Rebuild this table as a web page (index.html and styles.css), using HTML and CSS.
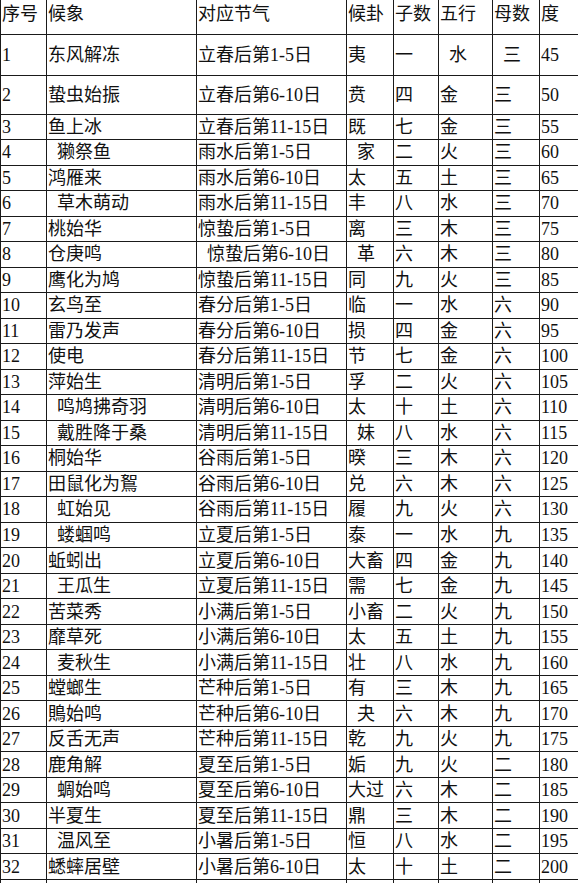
FILE: index.html
```html
<!DOCTYPE html>
<html lang="zh">
<head>
<meta charset="utf-8">
<title>七十二候</title>
<link rel="stylesheet" href="styles.css">
</head>
<body>
<table class="hou">
<colgroup>
<col class="c-no"><col class="c-xiang"><col class="c-jie"><col class="c-gua"><col class="c-zi"><col class="c-wu"><col class="c-mu"><col class="c-du">
</colgroup>
<thead>
<tr class="h0"><th>序号</th><th>候象</th><th>对应节气</th><th>候卦</th><th>子数</th><th>五行</th><th>母数</th><th>度</th></tr>
</thead>
<tbody>
<tr class="h1"><td>1</td><td>东风解冻</td><td>立春后第1-5日</td><td>夷</td><td>一</td><td class="i">水</td><td class="i">三</td><td>45</td></tr>
<tr class="h2"><td>2</td><td>蛰虫始振</td><td>立春后第6-10日</td><td>贲</td><td>四</td><td>金</td><td>三</td><td>50</td></tr>
<tr class="r"><td>3</td><td>鱼上冰</td><td>立春后第11-15日</td><td>既</td><td>七</td><td>金</td><td>三</td><td>55</td></tr>
<tr class="r"><td>4</td><td class="i">獭祭鱼</td><td>雨水后第1-5日</td><td class="i">家</td><td>二</td><td>火</td><td>三</td><td>60</td></tr>
<tr class="r"><td>5</td><td>鸿雁来</td><td>雨水后第6-10日</td><td>太</td><td>五</td><td>土</td><td>三</td><td>65</td></tr>
<tr class="r"><td>6</td><td class="i">草木萌动</td><td>雨水后第11-15日</td><td>丰</td><td>八</td><td>水</td><td>三</td><td>70</td></tr>
<tr class="r"><td>7</td><td>桃始华</td><td>惊蛰后第1-5日</td><td>离</td><td>三</td><td>木</td><td>三</td><td>75</td></tr>
<tr class="r"><td>8</td><td>仓庚鸣</td><td class="i">惊蛰后第6-10日</td><td class="i">革</td><td>六</td><td>木</td><td>三</td><td>80</td></tr>
<tr class="r"><td>9</td><td>鹰化为鸠</td><td>惊蛰后第11-15日</td><td>同</td><td>九</td><td>火</td><td>三</td><td>85</td></tr>
<tr class="r"><td>10</td><td>玄鸟至</td><td>春分后第1-5日</td><td>临</td><td>一</td><td>水</td><td>六</td><td>90</td></tr>
<tr class="r"><td>11</td><td>雷乃发声</td><td>春分后第6-10日</td><td>损</td><td>四</td><td>金</td><td>六</td><td>95</td></tr>
<tr class="r"><td>12</td><td>使电</td><td>春分后第11-15日</td><td>节</td><td>七</td><td>金</td><td>六</td><td>100</td></tr>
<tr class="r"><td>13</td><td>萍始生</td><td>清明后第1-5日</td><td>孚</td><td>二</td><td>火</td><td>六</td><td>105</td></tr>
<tr class="r"><td>14</td><td class="i">鸣鸠拂奇羽</td><td>清明后第6-10日</td><td>太</td><td>十</td><td>土</td><td>六</td><td>110</td></tr>
<tr class="r"><td>15</td><td class="i">戴胜降于桑</td><td>清明后第11-15日</td><td class="i">妹</td><td>八</td><td>水</td><td>六</td><td>115</td></tr>
<tr class="r"><td>16</td><td>桐始华</td><td>谷雨后第1-5日</td><td>暌</td><td>三</td><td>木</td><td>六</td><td>120</td></tr>
<tr class="r"><td>17</td><td>田鼠化为鴽</td><td>谷雨后第6-10日</td><td>兑</td><td>六</td><td>木</td><td>六</td><td>125</td></tr>
<tr class="r"><td>18</td><td class="i">虹始见</td><td>谷雨后第11-15日</td><td>履</td><td>九</td><td>火</td><td>六</td><td>130</td></tr>
<tr class="r"><td>19</td><td class="i">蝼蝈鸣</td><td>立夏后第1-5日</td><td>泰</td><td>一</td><td>水</td><td>九</td><td>135</td></tr>
<tr class="r"><td>20</td><td>蚯蚓出</td><td>立夏后第6-10日</td><td>大畜</td><td>四</td><td>金</td><td>九</td><td>140</td></tr>
<tr class="r"><td>21</td><td class="i">王瓜生</td><td>立夏后第11-15日</td><td>需</td><td>七</td><td>金</td><td>九</td><td>145</td></tr>
<tr class="r"><td>22</td><td>苦菜秀</td><td>小满后第1-5日</td><td>小畜</td><td>二</td><td>火</td><td>九</td><td>150</td></tr>
<tr class="r"><td>23</td><td>靡草死</td><td>小满后第6-10日</td><td>太</td><td>五</td><td>土</td><td>九</td><td>155</td></tr>
<tr class="r"><td>24</td><td class="i">麦秋生</td><td>小满后第11-15日</td><td>壮</td><td>八</td><td>水</td><td>九</td><td>160</td></tr>
<tr class="r"><td>25</td><td>螳螂生</td><td>芒种后第1-5日</td><td>有</td><td>三</td><td>木</td><td>九</td><td>165</td></tr>
<tr class="r"><td>26</td><td>鵙始鸣</td><td>芒种后第6-10日</td><td class="i">夬</td><td>六</td><td>木</td><td>九</td><td>170</td></tr>
<tr class="r"><td>27</td><td>反舌无声</td><td>芒种后第11-15日</td><td>乾</td><td>九</td><td>火</td><td>九</td><td>175</td></tr>
<tr class="r"><td>28</td><td>鹿角解</td><td>夏至后第1-5日</td><td>姤</td><td>九</td><td>火</td><td>二</td><td>180</td></tr>
<tr class="r"><td>29</td><td class="i">蜩始鸣</td><td>夏至后第6-10日</td><td>大过</td><td>六</td><td>木</td><td>二</td><td>185</td></tr>
<tr class="r"><td>30</td><td>半夏生</td><td>夏至后第11-15日</td><td>鼎</td><td>三</td><td>木</td><td>二</td><td>190</td></tr>
<tr class="r"><td>31</td><td class="i">温风至</td><td>小暑后第1-5日</td><td>恒</td><td>八</td><td>水</td><td>二</td><td>195</td></tr>
<tr class="r"><td>32</td><td>蟋蟀居壁</td><td>小暑后第6-10日</td><td>太</td><td>十</td><td>土</td><td>二</td><td>200</td></tr>
<tr class="r"><td></td><td></td><td></td><td></td><td></td><td></td><td></td><td></td></tr>
</tbody>
</table>
</body>
</html>
```

FILE: styles.css
```css
html, body {
  margin: 0;
  padding: 0;
  background: #ffffff;
  overflow: hidden;
}

.hou {
  border-collapse: collapse;
  table-layout: fixed;
  width: 579px;
  font-family: "Liberation Serif", "Noto Sans CJK SC", serif;
  font-size: 18px;
  color: #111;
}

.c-no { width: 46px; }
.c-xiang { width: 150px; }
.c-jie { width: 150px; }
.c-gua { width: 47px; }
.c-zi { width: 45px; }
.c-wu { width: 54px; }
.c-mu { width: 47px; }
.c-du { width: 40px; }

.hou th,
.hou td {
  border: 1px solid #1a1a1a;
  padding: 0 0 0 1px;
  text-align: left;
  white-space: nowrap;
  overflow: hidden;
  line-height: 20px;
  font-weight: 400;
  vertical-align: middle;
}

.hou th {
  border-top: none;
  vertical-align: top;
  padding-top: 4px;
}

.hou td.i {
  padding-left: 10px;
}

.h0 { height: 34px; }
.h1 { height: 41px; }
.h2 { height: 39px; }
.r { height: 25.53px; }
```
